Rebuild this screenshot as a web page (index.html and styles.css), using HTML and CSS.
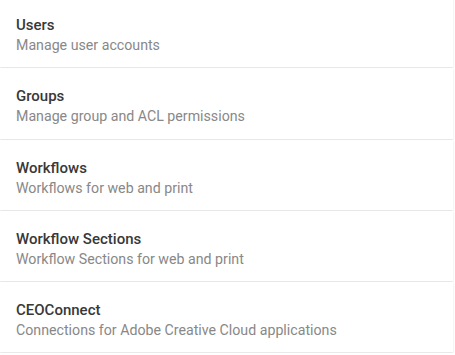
FILE: index.html
```html
<!DOCTYPE html>
<html lang="en">
<head>
    <meta charset="UTF-8">
    <meta name="viewport" content="width=device-width, initial-scale=1.0">
    <title>Settings</title>
    <link rel="stylesheet" href="styles.css">
</head>
<body>
    <div class="settings-list">
        <div class="settings-card">
            <div class="card-title">Users</div>
            <div class="card-desc">Manage user accounts</div>
        </div>
        <div class="settings-card">
            <div class="card-title">Groups</div>
            <div class="card-desc">Manage group and ACL permissions</div>
        </div>
        <div class="settings-card">
            <div class="card-title">Workflows</div>
            <div class="card-desc">Workflows for web and print</div>
        </div>
        <div class="settings-card">
            <div class="card-title">Workflow Sections</div>
            <div class="card-desc">Workflow Sections for web and print</div>
        </div>
        <div class="settings-card">
            <div class="card-title">CEOConnect</div>
            <div class="card-desc">Connections for Adobe Creative Cloud applications</div>
        </div>
    </div>
</body>
</html>
```

FILE: styles.css
```css
* {
    margin: 0;
    padding: 0;
    box-sizing: border-box;
}

body {
    font-family: Roboto, 'Liberation Sans', sans-serif;
    background: #ffffff;
    overflow: hidden;
}

.settings-list {
    margin-top: -3px;
    margin-right: 2px;
}

.settings-card {
    background: #fff;
    padding: 18px 16px 12.25px;
    margin-bottom: 1px;
    box-shadow: 0 1px 2px rgba(0, 0, 0, 0.13);
}

.card-title {
    font-size: 15px;
    font-weight: 500;
    line-height: 20px;
    color: #383838;
}

.card-desc {
    font-size: 14.2px;
    line-height: 20px;
    color: #888;
}
```
